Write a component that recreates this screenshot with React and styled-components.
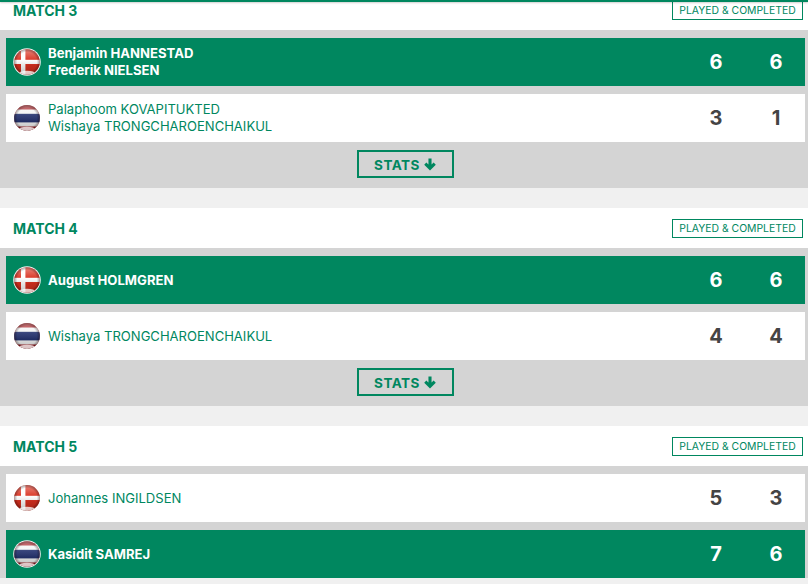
import React from 'react';
import styled, { createGlobalStyle } from 'styled-components';

const GlobalStyle = createGlobalStyle`
  html, body {
    margin: 0;
    padding: 0;
    background: #f0f0f0;
    overflow: hidden;
  }
  body {
    font-family: Inter, "Liberation Sans", sans-serif;
  }
`;

const matches = [
  {
    title: 'MATCH 3',
    stats: true,
    teams: [
      { flag: 'dk', winner: true, players: ['Benjamin HANNESTAD', 'Frederik NIELSEN'], scores: [6, 6] },
      { flag: 'th', players: ['Palaphoom KOVAPITUKTED', 'Wishaya TRONGCHAROENCHAIKUL'], scores: [3, 1] }
    ]
  },
  {
    title: 'MATCH 4',
    stats: true,
    teams: [
      { flag: 'dk', winner: true, players: ['August HOLMGREN'], scores: [6, 6] },
      { flag: 'th', players: ['Wishaya TRONGCHAROENCHAIKUL'], scores: [4, 4] }
    ]
  },
  {
    title: 'MATCH 5',
    teams: [
      { flag: 'dk', players: ['Johannes INGILDSEN'], scores: [5, 3] },
      { flag: 'th', winner: true, players: ['Kasidit SAMREJ'], scores: [7, 6] }
    ]
  }
];

const Flag = ({ code, ring }) => {
  const id = `${code}-${ring ? 'w' : 'p'}`;
  return (
    <FlagIcon viewBox="0 0 28 28" width="28" height="28">
      <defs>
        <clipPath id={`clip-${id}`}>
          <circle cx="14" cy="14" r={ring ? 12.8 : 12.9} />
        </clipPath>
        <linearGradient id={`shine-${id}`} x1="0" y1="0" x2="0" y2="1">
          <stop offset="0" stopColor="#fff" stopOpacity="0.45" />
          <stop offset="0.4" stopColor="#fff" stopOpacity="0.08" />
          <stop offset="0.62" stopColor="#000" stopOpacity="0.1" />
          <stop offset="1" stopColor="#000" stopOpacity="0.25" />
        </linearGradient>
        <radialGradient id={`edge-${id}`} cx="0.5" cy="0.5" r="0.5">
          <stop offset="0.7" stopColor="#000" stopOpacity="0" />
          <stop offset="1" stopColor="#300" stopOpacity="0.5" />
        </radialGradient>
      </defs>
      {ring && <circle cx="14" cy="14" r="13.8" fill="#f1f1f1" />}
      <g clipPath={`url(#clip-${id})`}>
        {code === 'dk' ? (
          <>
            <rect width="28" height="28" fill="#d9301f" />
            <rect x="8" width="4.4" height="28" fill="#fff" />
            <rect y="11.8" width="28" height="4.2" fill="#fff" />
          </>
        ) : (
          <>
            <rect width="28" height="28" fill="#a9242a" />
            <rect y="5.5" width="28" height="17" fill="#f4f4f4" />
            <rect y="9.8" width="28" height="8.6" fill="#26336f" />
          </>
        )}
        <rect width="28" height="28" fill={`url(#shine-${id})`} />
        <rect width="28" height="28" fill={`url(#edge-${id})`} />
        <ellipse cx="14" cy="25.6" rx="8.5" ry="2.8" fill="#fff" opacity="0.75" />
      </g>
    </FlagIcon>
  );
};

const ArrowDown = () => (
  <svg viewBox="0 0 14 14" width="14" height="14">
    <path d="M7 1.5V10.5M2.3 6.6L7 11.3L11.7 6.6" fill="none" stroke="#00875f" strokeWidth="3.1" />
  </svg>
);

const App = () => (
  <>
    <GlobalStyle />
    <TopLine />
    <Page>
      {matches.map((match) => (
        <Match key={match.title}>
          <MatchHeader>
            <MatchTitle>{match.title}</MatchTitle>
            <StatusTag>PLAYED &amp; COMPLETED</StatusTag>
          </MatchHeader>
          <MatchBody>
            {match.teams.map((team) => (
              <TeamRow key={team.players[0]} $winner={team.winner}>
                <Flag code={team.flag} ring={team.winner} />
                <Players $winner={team.winner}>
                  {team.players.map((name) => (
                    <span key={name}>{name}</span>
                  ))}
                </Players>
                <Scores>
                  {team.scores.map((score, i) => (
                    <Score key={i} $winner={team.winner}>
                      {score}
                    </Score>
                  ))}
                </Scores>
              </TeamRow>
            ))}
            {match.stats && (
              <StatsRow>
                <StatsButton>
                  <StatsLabel>STATS</StatsLabel>
                  <ArrowDown />
                </StatsButton>
              </StatsRow>
            )}
          </MatchBody>
        </Match>
      ))}
    </Page>
  </>
);

export default App;

const TopLine = styled.div`
  position: absolute;
  top: 0;
  left: 0;
  right: 0;
  height: 2px;
  background: #00875f;
  box-shadow: 0 1px 2px rgba(0, 0, 0, 0.2);
  z-index: 2;
`;

const Page = styled.div`
  width: 808px;
  height: 584px;
  overflow: hidden;
  display: flex;
  flex-direction: column;
  gap: 20px;
  background: #f0f0f0;

  & > div:first-child {
    margin-top: -10px;
  }
`;

const Match = styled.div`
  flex: none;
`;

const MatchHeader = styled.div`
  display: flex;
  align-items: center;
  justify-content: space-between;
  height: 40px;
  padding: 0 5px 0 13px;
  background: #fff;
`;

const MatchTitle = styled.div`
  font-size: 14px;
  font-weight: 700;
  color: #00875f;
`;

const StatusTag = styled.div`
  box-sizing: border-box;
  height: 19px;
  width: 131px;
  border: 1px solid #00875f;
  font-size: 10.4px;
  line-height: 17px;
  text-align: center;
  color: #00875f;
  white-space: nowrap;
`;

const MatchBody = styled.div`
  display: flex;
  flex-direction: column;
  gap: 8px;
  padding: 8px 3px 0 6px;
  background: #d4d4d4;
`;

const TeamRow = styled.div`
  display: flex;
  align-items: center;
  height: 48px;
  padding: 0 3px 0 7px;
  background: ${(p) => (p.$winner ? '#00875f' : '#fff')};
  color: ${(p) => (p.$winner ? '#fff' : '#00875f')};
  font-weight: ${(p) => (p.$winner ? 700 : 400)};
`;

const FlagIcon = styled.svg`
  flex: none;
  display: block;
`;

const Players = styled.div`
  display: flex;
  flex-direction: column;
  margin-left: 7px;
  font-size: ${(p) => (p.$winner ? '13.1px' : '13.05px')};
  line-height: 17px;
`;

const Scores = styled.div`
  display: flex;
  gap: 8px;
  margin-left: auto;
`;

const Score = styled.div`
  width: 52px;
  text-align: center;
  font-size: 20px;
  font-weight: 700;
  color: ${(p) => (p.$winner ? '#fff' : '#444')};
`;

const StatsRow = styled.div`
  display: flex;
  justify-content: center;
  height: 38px;
`;

const StatsButton = styled.div`
  box-sizing: border-box;
  display: flex;
  align-items: center;
  justify-content: center;
  gap: 3px;
  width: 97px;
  height: 28px;
  border: 2px solid #00875f;
  color: #00875f;
`;

const StatsLabel = styled.span`
  padding-top: 1px;
  font-size: 13.5px;
  font-weight: 700;
  letter-spacing: 0.5px;
`;
